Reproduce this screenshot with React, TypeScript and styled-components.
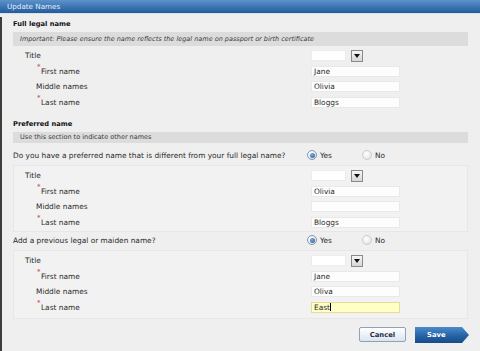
import styled, { createGlobalStyle } from 'styled-components';

type NameSet = {
  first: string;
  middle: string;
  last: string;
  focusLast?: boolean;
};

const legal: NameSet = { first: 'Jane', middle: 'Olivia', last: 'Bloggs' };
const preferred: NameSet = { first: 'Olivia', middle: '', last: 'Bloggs' };
const previous: NameSet = { first: 'Jane', middle: 'Oliva', last: 'East', focusLast: true };

export default function App() {
  return (
    <>
      <GlobalStyle />
      <Dialog>
        <TitleBar>Update Names</TitleBar>
        <Body>
          <Heading>Full legal name</Heading>
          <Notice $italic>
            Important: Please ensure the name reflects the legal name on passport or birth
            certificate
          </Notice>
          <NameFields names={legal} />

          <Heading $gap={7}>Preferred name</Heading>
          <Notice $compact>Use this section to indicate other names</Notice>
          <Question $gap={5}>
            <span>Do you have a preferred name that is different from your full legal name?</span>
            <RadioOption>
              <Radio $checked />
              Yes
            </RadioOption>
            <RadioOption>
              <Radio />
              No
            </RadioOption>
          </Question>
          <Panel $bottom={2}>
            <NameFields names={preferred} />
          </Panel>

          <Question $gap={1}>
            <span>Add a previous legal or maiden name?</span>
            <RadioOption>
              <Radio $checked />
              Yes
            </RadioOption>
            <RadioOption>
              <Radio />
              No
            </RadioOption>
          </Question>
          <Panel $bottom={4}>
            <NameFields names={previous} />
          </Panel>

          <Actions>
            <CancelButton type="button">Cancel</CancelButton>
            <SaveButton type="button">Save</SaveButton>
          </Actions>
        </Body>
      </Dialog>
    </>
  );
}

function NameFields({ names }: { names: NameSet }) {
  return (
    <>
      <Row>
        <Label $indent={12}>Title</Label>
        <Select>
          <SelectBox />
          <SelectArrow>
            <svg width="6" height="4" viewBox="0 0 6 4">
              <path d="M0 0h6L3 4z" fill="#111" />
            </svg>
          </SelectArrow>
        </Select>
      </Row>
      <Row>
        <Label $indent={24}>
          <Required>*</Required>First name
        </Label>
        <TextBox>{names.first}</TextBox>
      </Row>
      <Row>
        <Label $indent={23}>Middle names</Label>
        <TextBox>{names.middle}</TextBox>
      </Row>
      <Row>
        <Label $indent={24}>
          <Required>*</Required>Last name
        </Label>
        <TextBox $focused={names.focusLast}>
          {names.last}
          {names.focusLast && <Caret />}
        </TextBox>
      </Row>
    </>
  );
}

const GlobalStyle = createGlobalStyle`
  html, body {
    margin: 0;
    padding: 0;
    background: #efefef;
  }
  body {
    font-family: "DejaVu Sans", Verdana, sans-serif;
    color: #2a2a2a;
  }
`;

const Dialog = styled.div`
  width: 480px;
  height: 351px;
  overflow: hidden;
  background: #efefef;
`;

const TitleBar = styled.div`
  height: 13px;
  line-height: 13px;
  padding-left: 7px;
  font-size: 7.2px;
  color: #e8f0fa;
  background: linear-gradient(#5d92ca, #3a74b2 55%, #245c99);
  border-bottom: 1px solid #d9e2ec;
`;

const Body = styled.div`
  height: 337px;
  box-sizing: border-box;
  padding: 0 12px 0 11px;
  border-left: 2px solid #3d3d3d;
`;

const Heading = styled.div<{ $gap?: number }>`
  margin-top: ${({ $gap }) => $gap ?? 3}px;
  line-height: 14px;
  font-size: 6.7px;
  font-weight: bold;
  color: #111;
`;

const Notice = styled.div<{ $italic?: boolean; $compact?: boolean }>`
  margin: 1px 0 2px;
  height: ${({ $compact }) => ($compact ? 11 : 14)}px;
  line-height: ${({ $compact }) => ($compact ? 11 : 14)}px;
  padding-left: 7px;
  background: #dcdcdc;
  font-size: 6.5px;
  font-style: ${({ $italic }) => ($italic ? 'italic' : 'normal')};
  color: #3a3a3a;
  white-space: nowrap;
`;

const Row = styled.div`
  display: grid;
  grid-template-columns: 298px 1fr;
  align-items: center;
  height: 15.5px;
`;

const Label = styled.div<{ $indent: number }>`
  display: flex;
  align-items: center;
  padding-left: ${({ $indent }) => $indent}px;
  font-size: 7.4px;
`;

const Required = styled.span`
  position: relative;
  top: -4px;
  margin-right: 0.5px;
  font-size: 7px;
  color: #c4365a;
`;

const TextBox = styled.div<{ $focused?: boolean }>`
  display: flex;
  align-items: center;
  width: 89px;
  height: 11px;
  box-sizing: border-box;
  padding-left: 2px;
  font-size: 7.4px;
  background: ${({ $focused }) => ($focused ? '#ffffc6' : '#fdfdfd')};
  border: 1px solid ${({ $focused }) => ($focused ? '#e4dc9c' : '#e9e9e9')};
`;

const Caret = styled.span`
  width: 1px;
  height: 8px;
  background: #000;
`;

const Select = styled.div`
  display: flex;
  align-items: center;
  gap: 5px;
`;

const SelectBox = styled.div`
  width: 35px;
  height: 11px;
  box-sizing: border-box;
  background: #fff;
  border: 1px solid #ececec;
`;

const SelectArrow = styled.div`
  display: flex;
  align-items: center;
  justify-content: center;
  width: 12px;
  height: 12px;
  box-sizing: border-box;
  border: 1px solid #8a8a8a;
  background: linear-gradient(#f6f6f6, #d6d6d6);
`;

const Question = styled.div<{ $gap: number }>`
  display: grid;
  grid-template-columns: 294px 55px 55px;
  align-items: center;
  margin-top: ${({ $gap }) => $gap}px;
  height: 14px;
  font-size: 7.4px;
  white-space: nowrap;
`;

const RadioOption = styled.label`
  display: flex;
  align-items: center;
  gap: 3px;
`;

const Radio = styled.span<{ $checked?: boolean }>`
  position: relative;
  width: 10px;
  height: 10px;
  box-sizing: border-box;
  border-radius: 50%;
  border: 1px solid ${({ $checked }) => ($checked ? '#8098b2' : '#cccccc')};
  background: radial-gradient(circle at 40% 35%, #fff, #dedede);

  &::after {
    content: '';
    display: ${({ $checked }) => ($checked ? 'block' : 'none')};
    position: absolute;
    left: 1.5px;
    top: 1.5px;
    width: 5px;
    height: 5px;
    border-radius: 50%;
    background: radial-gradient(circle at 40% 35%, #7aaae0, #2a5a98);
  }
`;

const Panel = styled.div<{ $bottom: number }>`
  margin-top: 3px;
  padding: 3px 0 ${({ $bottom }) => $bottom}px;
  background: #f2f2f2;
  box-shadow: inset 0 0 0 1px #e7e7e7;
`;

const Actions = styled.div`
  display: flex;
  justify-content: flex-end;
  gap: 9px;
  margin-top: 8px;
  margin-right: -1px;
`;

const CancelButton = styled.button`
  width: 47px;
  height: 15px;
  padding: 0;
  border: 1px solid #8ea2b8;
  border-radius: 2px;
  background: linear-gradient(#ffffff, #dbe4ee);
  font-family: inherit;
  font-size: 6.8px;
  font-weight: bold;
  color: #1d2b47;
`;

const SaveButton = styled.button`
  width: 54px;
  height: 16px;
  padding: 0 0 0 12px;
  border: none;
  text-align: left;
  clip-path: polygon(0 0, 87% 0, 100% 50%, 87% 100%, 0 100%);
  background: linear-gradient(#4c8bca, #2463a6 55%, #184b88);
  font-family: inherit;
  font-size: 6.8px;
  font-weight: bold;
  color: #fff;
`;
